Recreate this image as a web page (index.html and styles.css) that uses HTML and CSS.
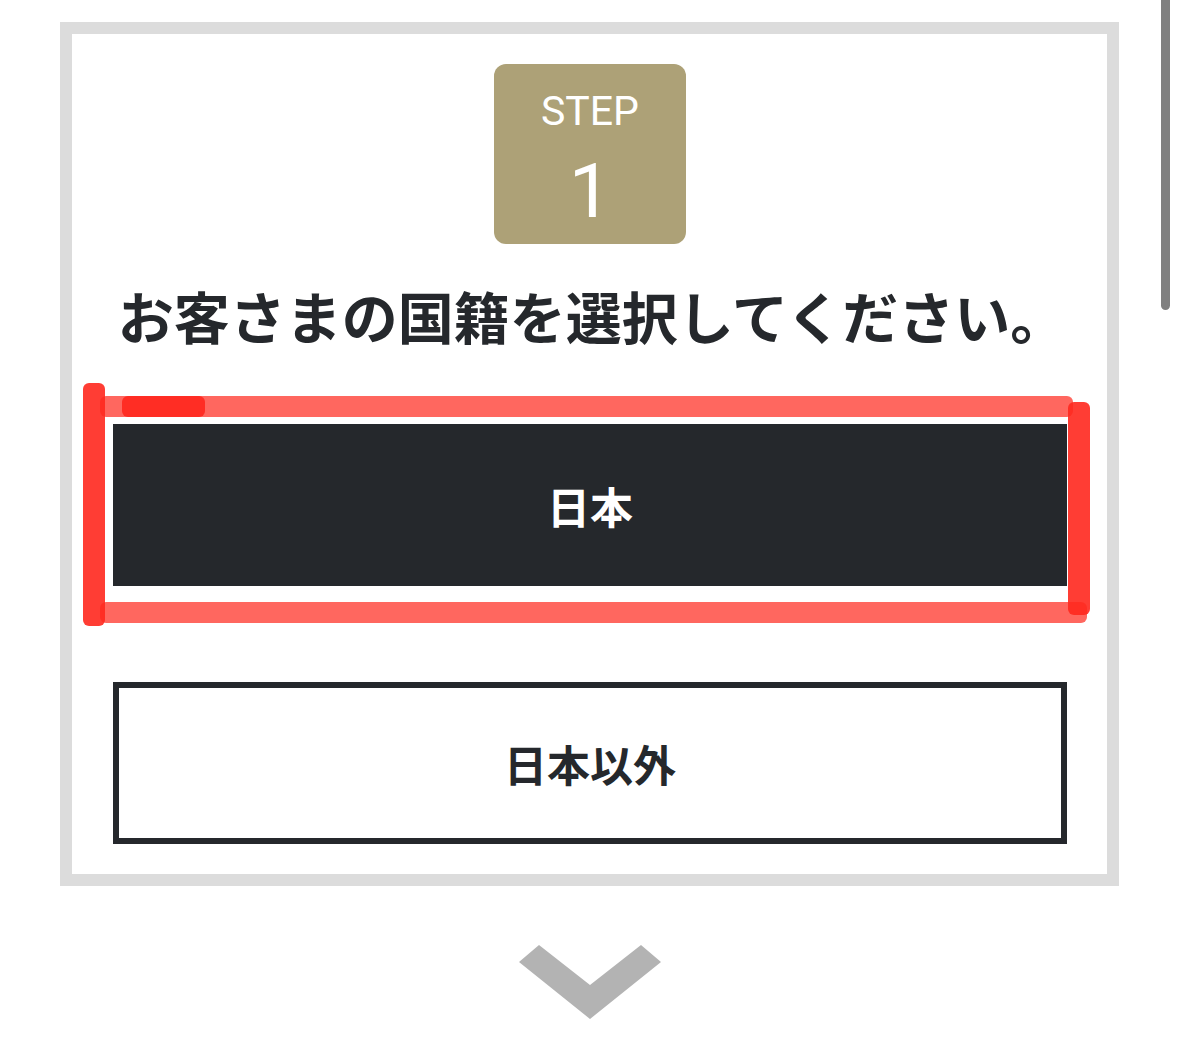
FILE: index.html
```html
<!DOCTYPE html>
<html lang="ja">
<head>
  <meta charset="UTF-8" />
  <meta name="viewport" content="width=device-width, initial-scale=1.0" />
  <title>国籍の選択</title>
  <link rel="stylesheet" href="styles.css">
</head>
<body>
  <div class="page">
    <div class="step-card">
      <div class="step-badge">
        <span class="step-label">STEP</span>
        <span class="step-num">1</span>
      </div>

      <h1>お客さまの国籍を選択してください。</h1>

      <div class="choice-list">
        <div class="choice-wrap">
          <button class="choice choice-dark">日本</button>
          <span class="mark mark-top"></span>
          <span class="mark mark-top-dot"></span>
          <span class="mark mark-bottom"></span>
          <span class="mark mark-left"></span>
          <span class="mark mark-right"></span>
        </div>
        <button class="choice choice-light">日本以外</button>
      </div>
    </div>

    <div class="next-arrow">
      <svg width="144" height="78" viewBox="0 0 144 78">
        <polygon points="1,19 21,2 72,42 123,2 143,19 72,76" fill="#b3b3b3" />
      </svg>
    </div>
  </div>

  <div class="scroll-thumb"></div>
</body>
</html>
```

FILE: styles.css
```css
body {
  margin: 0;
  background: #fff;
  font-family: 'Noto Sans CJK JP', 'Noto Sans', sans-serif;
  color: #25282c;
}

.page {
  padding: 22px 60px 0;
}

.step-card {
  border: 12px solid #dcdcdc;
  padding: 30px 40px 30px 41px;
  display: flex;
  flex-direction: column;
  align-items: center;
}

.step-badge {
  width: 192px;
  height: 180px;
  box-sizing: border-box;
  background: #ada177;
  border-radius: 12px;
  color: #fff;
  font-family: Roboto, 'Noto Sans', sans-serif;
  display: flex;
  flex-direction: column;
  align-items: center;
  padding-top: 25px;
}

.step-label {
  font-size: 41px;
  line-height: 44px;
}

.step-num {
  font-size: 76px;
  line-height: 76px;
  margin-top: 20px;
}

h1 {
  margin: 32px 0 0;
  font-size: 56px;
  line-height: 77px;
  font-weight: 700;
  text-align: center;
  white-space: nowrap;
  padding-left: 4px;
}

.choice-list {
  width: 100%;
  margin-top: 71px;
  display: flex;
  flex-direction: column;
  gap: 96px;
}

.choice-wrap {
  position: relative;
}

.choice {
  display: block;
  width: 100%;
  height: 162px;
  font-family: 'Noto Sans CJK JP', sans-serif;
  font-size: 43px;
  font-weight: 700;
  border: none;
  cursor: pointer;
}

.choice-dark {
  background: #25282c;
  color: #fff;
}

.choice-light {
  background: #fff;
  color: #25282c;
  border: 6px solid #25282c;
}

/* hand-drawn highlight around the first button */
.mark {
  position: absolute;
  border-radius: 6px;
  filter: blur(0.6px);
}

.mark-top,
.mark-bottom {
  background: rgba(255, 60, 50, 0.78);
  height: 21px;
}

.mark-top {
  left: -13px;
  top: -28px;
  width: 973px;
}

.mark-top-dot {
  left: 9px;
  top: -28px;
  width: 83px;
  height: 21px;
  background: #ff2d24;
}

.mark-bottom {
  left: -13px;
  top: 178px;
  width: 987px;
}

.mark-left,
.mark-right {
  background: rgba(255, 40, 30, 0.9);
  width: 22px;
}

.mark-left {
  left: -30px;
  top: -41px;
  height: 243px;
}

.mark-right {
  left: 955px;
  top: -22px;
  height: 213px;
}

.next-arrow {
  display: flex;
  justify-content: center;
  margin-top: 57px;
  padding-left: 1px;
}

.scroll-thumb {
  position: fixed;
  top: -6px;
  left: 1161px;
  width: 9px;
  height: 316px;
  background: #808080;
  border-radius: 5px;
}
```
